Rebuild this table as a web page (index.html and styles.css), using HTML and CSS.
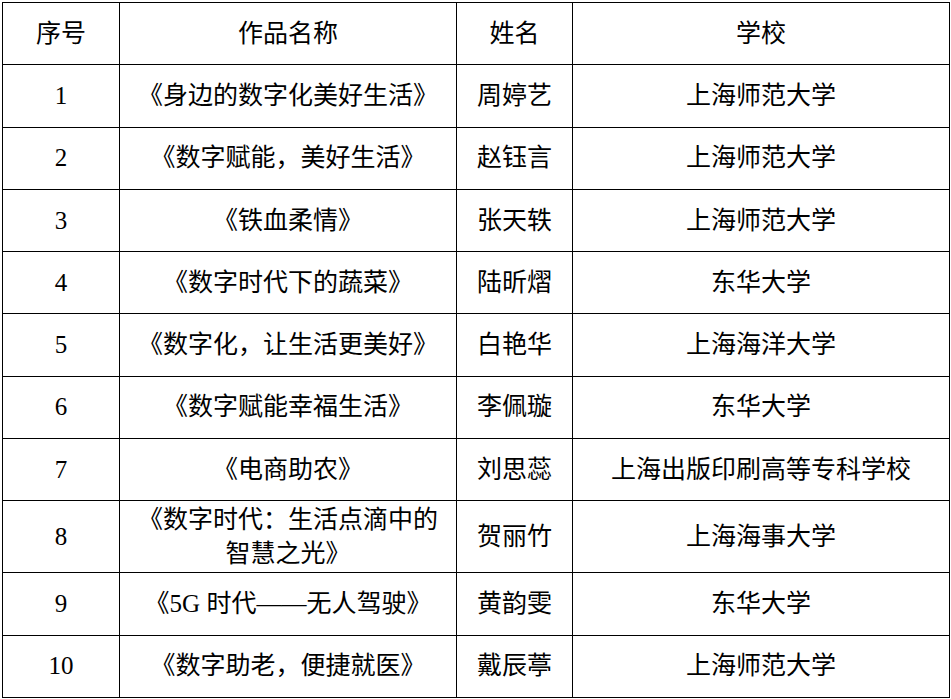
FILE: index.html
```
<!DOCTYPE html>
<html lang="zh-CN">
<head>
<meta charset="utf-8">
<link rel="stylesheet" href="styles.css">
</head>
<body>
<table class="list">
  <colgroup>
    <col class="c-no"><col class="c-title"><col class="c-name"><col class="c-school">
  </colgroup>
  <tr class="row"><td>序号</td><td>作品名称</td><td>姓名</td><td>学校</td></tr>
  <tr class="row"><td>1</td><td>《身边的数字化美好生活》</td><td>周婷艺</td><td>上海师范大学</td></tr>
  <tr class="row"><td>2</td><td>《数字赋能，美好生活》</td><td>赵钰言</td><td>上海师范大学</td></tr>
  <tr class="row"><td>3</td><td>《铁血柔情》</td><td>张天轶</td><td>上海师范大学</td></tr>
  <tr class="row"><td>4</td><td>《数字时代下的蔬菜》</td><td>陆昕熠</td><td>东华大学</td></tr>
  <tr class="row"><td>5</td><td>《数字化，让生活更美好》</td><td>白艳华</td><td>上海海洋大学</td></tr>
  <tr class="row"><td>6</td><td>《数字赋能幸福生活》</td><td>李佩璇</td><td>东华大学</td></tr>
  <tr class="row"><td>7</td><td>《电商助农》</td><td>刘思蕊</td><td>上海出版印刷高等专科学校</td></tr>
  <tr class="row tall"><td>8</td><td>《数字时代：生活点滴中的智慧之光》</td><td>贺丽竹</td><td>上海海事大学</td></tr>
  <tr class="row"><td>9</td><td>《5G 时代——无人驾驶》</td><td>黄韵雯</td><td>东华大学</td></tr>
  <tr class="row"><td>10</td><td>《数字助老，便捷就医》</td><td>戴辰葶</td><td>上海师范大学</td></tr>
</table>
</body>
</html>
```
FILE: styles.css
```
html, body {
  margin: 0;
  padding: 0;
  background: #fff;
}
body {
  padding: 2px 0 0 2px;
}
.list {
  border-collapse: collapse;
  table-layout: fixed;
  width: 947px;
  font-family: "Liberation Serif", "Noto Sans CJK SC", serif;
  font-size: 25px;
  color: #000;
}
.c-no { width: 117px; }
.c-title { width: 337px; }
.c-name { width: 116px; }
.c-school { width: 377px; }
.list td {
  border: 1px solid #000;
  text-align: center;
  vertical-align: middle;
  padding: 0 10px;
  line-height: 34px;
  height: 62.3px;
  box-sizing: border-box;
}
.list tr.tall td {
  height: 72px;
}
```
